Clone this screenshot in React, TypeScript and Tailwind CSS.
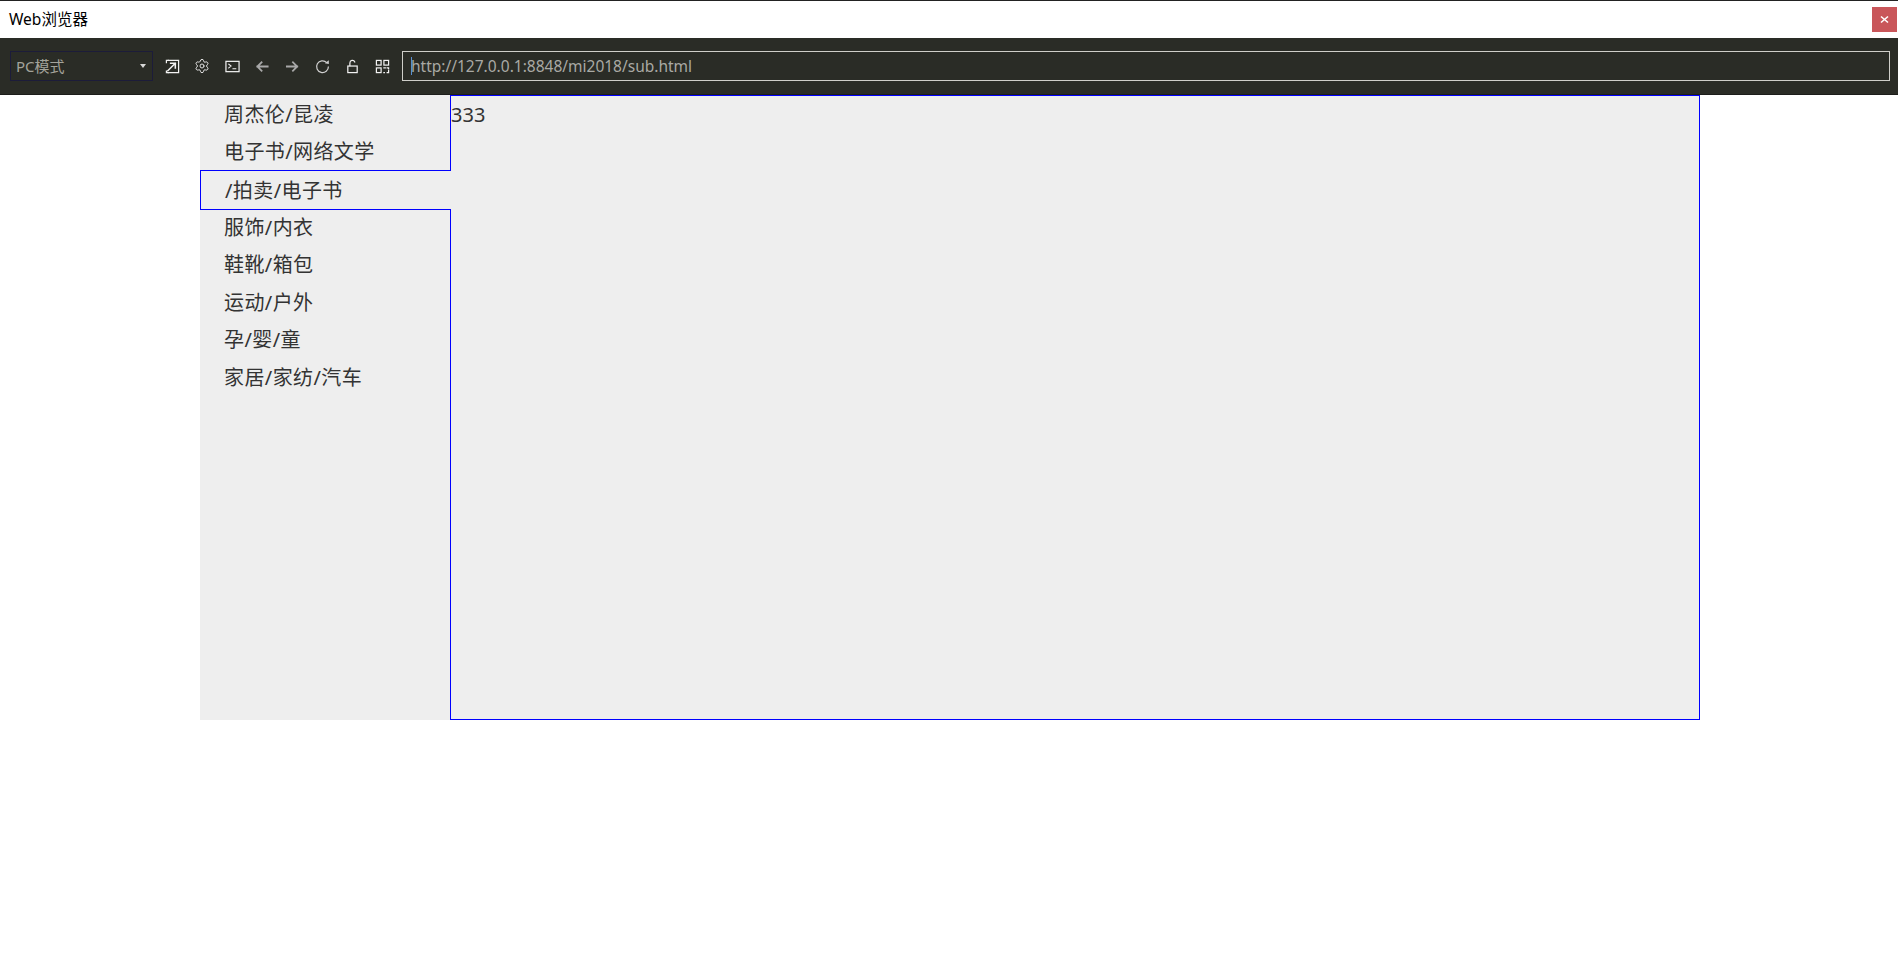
import { Settings } from "lucide-react";

const font = { fontFamily: '"Noto Sans", "Noto Sans CJK SC", sans-serif' };

const stroke = {
  fill: "none",
  stroke: "currentColor",
  strokeWidth: 1.3,
  strokeLinecap: "square" as const,
};

function Icon({ children, className = "text-[#f2f2f2]" }: { children: React.ReactNode; className?: string }) {
  return (
    <button className={`flex h-[30px] w-[30px] items-center justify-center ${className}`}>
      <svg width="15" height="15" viewBox="0 0 16 16" {...stroke}>
        {children}
      </svg>
    </button>
  );
}

const items = [
  { label: "周杰伦/昆凌", h: "h-[38px] pt-[2px]" },
  { label: "电子书/网络文学", h: "h-[37px] pt-[1px]" },
  { label: "/拍卖/电子书", h: "h-[40px] pt-[1px]", active: true },
  { label: "服饰/内衣", h: "h-[36px]" },
  { label: "鞋靴/箱包", h: "h-[37px]" },
  { label: "运动/户外", h: "h-[38px] pt-[2px]" },
  { label: "孕/婴/童", h: "h-[38px]" },
  { label: "家居/家纺/汽车", h: "h-[38px]" },
];

export default function App() {
  return (
    <div className="min-h-[974px] bg-white" style={font}>
      <div className="flex h-[38px] items-center justify-between border-t border-[#222] bg-white pl-[9px] pr-px">
        <span className="pt-px text-[15.5px] text-black">Web浏览器</span>
        <button className="flex h-[25px] w-[25px] items-center justify-center bg-[#c9565a] text-white">
          <svg width="9" height="9" viewBox="0 0 9 9" fill="none" stroke="currentColor" strokeWidth="1.6">
            <path d="M1 1.5 8 7.5M8 1.5 1 7.5" />
          </svg>
        </button>
      </div>

      <div className="flex h-[57px] items-center border-b border-[#1c1d1a] bg-[#2a2c26] pl-[10px] pr-2">
        <div className="flex h-[30px] w-[143px] items-center justify-between border border-[#1c1c3a] pl-[5px] pr-[6px] text-[15px] text-[#a3a39b]">
          <span>PC模式</span>
          <span className="h-0 w-0 border-x-[3px] border-t-[4px] border-x-transparent border-t-[#d8d8d8]" />
        </div>

        <div className="ml-[4px] flex">
          <Icon>
            <path d="M3.5 1.5H14.5V14.5H3.5" />
            <path d="M1.5 4V1.5H3.5M3.5 14.5H1.5V13" />
            <path d="M11 4.5H6M11 4.5V9.5M11 4.5 3 12.5" strokeWidth="1.6" />
          </Icon>
          <button className="flex h-[30px] w-[30px] items-center justify-center text-[#e0e0e0]">
            <Settings size={16} strokeWidth={1.5} />
          </button>
          <Icon>
            <rect x="1" y="2.5" width="14" height="11" />
            <path d="M4 5.5 6.5 7.5 4 9.5M8.5 10.5H11.5" strokeWidth="1.1" />
          </Icon>
          <Icon className="text-[#a8a8a8]">
            <path d="M13.5 8H2.5M7 3.5 2.5 8 7 12.5" strokeWidth="1.9" />
          </Icon>
          <Icon className="text-[#a8a8a8]">
            <path d="M2 8H13M8.5 3.5 13 8 8.5 12.5" strokeWidth="1.9" />
          </Icon>
          <Icon className="text-[#d0d0d0]">
            <path d="M12.5 3.8A6.3 6.3 0 1 0 14.3 8" strokeLinecap="butt" />
            <path d="M10.5 4.6 14.7 5.4 14.7 1.2Z" fill="currentColor" stroke="none" />
          </Icon>
          <Icon>
            <rect x="3" y="7.5" width="10" height="7" />
            <path d="M5.2 7V4.2A2.7 2.7 0 0 1 10.4 3.2" />
          </Icon>
          <Icon>
            <rect x="1.5" y="1.5" width="5" height="5" />
            <rect x="9.5" y="1.5" width="5" height="5" />
            <rect x="1.5" y="9.5" width="5" height="5" />
            <path d="M9.5 9.5H11M9.5 14.5H10M13 9.5H14.5V10.5M14.5 12.5V14.5H13" />
          </Icon>
        </div>

        <div className="ml-[5px] flex h-[30px] flex-1 items-center border border-[#cfcfc9] pl-2 text-[15.5px] text-[#a9a9a4]">
          <span className="mr-[-1px] h-[18px] w-px bg-[#5a8fd0]" />
          <span className="pt-px">http://127.0.0.1:8848/mi2018/sub.html</span>
        </div>
      </div>

      <div className="ml-[200px] flex h-[625px] w-[1500px] bg-[#eeeeee] text-[20px] text-[#333]">
        <ul className="w-[250px] shrink-0 tracking-[0.4px]">
          {items.map((it) =>
            it.active ? (
              <li
                key={it.label}
                className={`relative z-10 -mr-px flex items-center border border-r-0 border-[#0000ff] bg-[#eeeeee] pl-[24px] ${it.h}`}
              >
                {it.label}
              </li>
            ) : (
              <li key={it.label} className={`flex items-center pl-[24px] ${it.h}`}>
                {it.label}
              </li>
            ),
          )}
        </ul>
        <div className="flex-1 border border-[#0000ff] bg-[#eeeeee] leading-[38px]">333</div>
      </div>
    </div>
  );
}
